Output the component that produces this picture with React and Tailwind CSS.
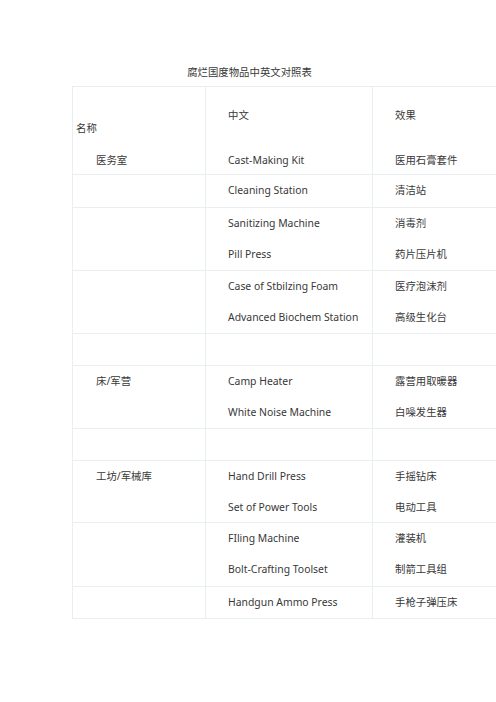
const rows = [
  { h: "h-[33px]", items: [["Cleaning Station", "清洁站"]] },
  { h: "h-[63px]", items: [["Sanitizing Machine", "消毒剂"], ["Pill Press", "药片压片机"]] },
  { h: "h-[63px]", items: [["Case of Stbilzing Foam", "医疗泡沫剂"], ["Advanced Biochem Station", "高级生化台"]] },
  { h: "h-[32px]", items: [] },
  { h: "h-[63px]", name: "床/军营", items: [["Camp Heater", "露营用取暖器"], ["White Noise Machine", "白噪发生器"]] },
  { h: "h-[32px]", items: [] },
  { h: "h-[62px]", name: "工坊/军械库", items: [["Hand Drill Press", "手摇钻床"], ["Set of Power Tools", "电动工具"]] },
  { h: "h-[64px]", items: [["FIling Machine", "灌装机"], ["Bolt-Crafting Toolset", "制箭工具组"]] },
  { h: "h-[32px]", items: [["Handgun Ammo Press", "手枪子弹压床"]] },
];

export default function App() {
  return (
    <div
      className="w-[496px] h-[702px] overflow-hidden bg-white text-[#383838] text-[10.4px]"
      style={{ fontFamily: '"Noto Sans", "Noto Sans CJK SC", sans-serif' }}
    >
      <div className="pt-[64px] h-[86px] text-center pl-[3px] leading-[16px]">腐烂国度物品中英文对照表</div>
      <div className="ml-[72px] w-[467px] border-t border-l border-[#e9eef0]">
        <div className="flex h-[88px] border-b border-[#e9eef0]">
          <div className="w-[133px] border-r border-[#e9eef0]">
            <div className="pt-[33px] pl-[3px] leading-[16px]">名称</div>
            <div className="pt-[16px] pl-[23px] leading-[16px]">医务室</div>
          </div>
          <div className="w-[167px] border-r border-[#e9eef0] pl-[22px]">
            <div className="pt-[20px] leading-[16px]">中文</div>
            <div className="pt-[29px] leading-[16px]">Cast-Making Kit</div>
          </div>
          <div className="flex-1 pl-[22px]">
            <div className="pt-[20px] leading-[16px]">效果</div>
            <div className="pt-[29px] leading-[16px]">医用石膏套件</div>
          </div>
        </div>
        {rows.map((r, i) => (
          <div key={i} className={`flex border-b border-[#e9eef0] ${r.h}`}>
            <div className="w-[133px] border-r border-[#e9eef0] pl-[23px] leading-[31px]">{r.name}</div>
            <div className="w-[167px] border-r border-[#e9eef0] pl-[22px] leading-[31px]">
              {r.items.map((it) => (
                <div key={it[0]}>{it[0]}</div>
              ))}
            </div>
            <div className="flex-1 pl-[22px] leading-[31px]">
              {r.items.map((it) => (
                <div key={it[1]}>{it[1]}</div>
              ))}
            </div>
          </div>
        ))}
      </div>
    </div>
  );
}
